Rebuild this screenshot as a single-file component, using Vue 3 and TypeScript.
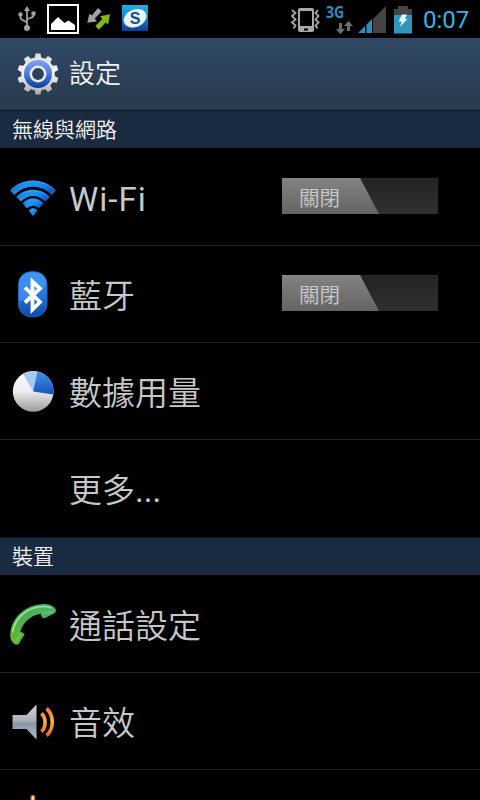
<template>
  <div class="screen">
    <!-- System status bar -->
    <div class="status-bar">
      <div class="notifications">
        <svg class="usb" width="20" height="28" viewBox="17 5 20 28">
          <g fill="none" stroke="#a3a5a3" stroke-width="1.7">
            <path d="M27 9v18M27 23.500c0-3-6.500-2.500-6.500-6v-3M27 20.500c0-3 6.500-2 6.500-5v-3" />
          </g>
          <path d="M27 6l3 5h-6zM31.500 11.500h4v4h-4z" fill="#a3a5a3" />
          <circle cx="20.500" cy="14.500" r="2.200" fill="#a3a5a3" />
          <circle cx="27" cy="28" r="3" fill="#a3a5a3" />
        </svg>
        <svg class="picture" width="32" height="30" viewBox="0 0 32 30">
          <rect x="1" y="1" width="30" height="28" fill="#000" stroke="#fff" stroke-width="2" />
          <path d="M4 26v-6l7-7 6.500 6 4-2.500L28 21v5z" fill="#fff" />
        </svg>
        <svg class="transfer" width="24" height="24" viewBox="87 7 24 24">
          <path d="M98 8l3.600 3.600-6.900 7 2.200 3-9.600 1.200 2-9 2.500 1.600z" fill="#a0a1a0" />
          <path d="M98.700 29.700l-3.400-3.600 7-7.200-2.200-2.600 9.900-2-1.900 10.400-2.400-2.200z" fill="#83b812" />
        </svg>
        <svg width="26" height="26" viewBox="0 0 26 26">
          <defs>
            <linearGradient id="appBg" x2="0" y2="1">
              <stop offset="0" stop-color="#18b3e5" />
              <stop offset=".5" stop-color="#1683cc" />
              <stop offset="1" stop-color="#093c98" />
            </linearGradient>
          </defs>
          <rect width="26" height="26" fill="url(#appBg)" />
          <ellipse cx="13" cy="13.200" rx="11.800" ry="8.700" fill="#eaf3f8" transform="rotate(-24 13 13)" />
          <text x="13.200" y="18.800" class="app-letter">S</text>
        </svg>
      </div>

      <div class="indicators">
        <svg class="vibrate" width="30" height="26" viewBox="290 7 30 26">
          <rect x="298" y="8" width="16" height="24" rx="2" fill="#a7a9a7" />
          <path d="M300 11h12v15h-12zM304 28.500h4v2h-4z" fill="#000" />
          <path d="M292 10l3.500 3-3.500 3 3.500 3.500-3.500 3 3.500 3-2 3M318 10l-2.500 3 3 3-3 3.500 3 3-3 3 2 3" fill="none" stroke="#a7a9a7" stroke-width="1.800" />
        </svg>
        <div class="network">
          <span>3G</span>
          <svg width="18" height="14" viewBox="336 21 18 14">
            <path d="M339 23h3v6h3l-4.500 5.300-4.500-5.300h3zM347 31v-5h-3l4.500-5 4.500 5h-3v5z" fill="#6c6d6e" />
          </svg>
        </div>
        <svg class="signal" width="28" height="27" viewBox="0 0 28 27">
          <path d="M28 0v27H15V13z" fill="#444" />
          <path d="M0 27l7-7v7zM8.500 27v-8.500L14 13v14z" fill="#2b8fba" />
        </svg>
        <svg class="battery" width="18" height="28" viewBox="0 0 18 28">
          <path d="M4 0h10v3h4v7H0V3h4z" fill="#444" />
          <path d="M0 9h18v18.500H0z" fill="#3295bd" />
          <path d="M8 8.500h5l-2 4.500h2.500L6 21l1.500-5.500H4.500z" fill="#e4f4fa" />
        </svg>
        <span class="clock">0:07</span>
      </div>
    </div>

    <!-- Title bar -->
    <div class="title-bar">
      <svg class="title-icon" width="42" height="42" viewBox="-21 -21 42 42">
        <defs>
          <linearGradient id="gear" x2="0" y2="1">
            <stop offset="0" stop-color="#dcdcdc" />
            <stop offset=".5" stop-color="#f7f7f5" />
            <stop offset="1" stop-color="#aaa9a7" />
          </linearGradient>
          <linearGradient id="gearRing" x2="0" y2="1">
            <stop offset="0" stop-color="#7ea1ff" />
            <stop offset=".5" stop-color="#4b78df" />
            <stop offset="1" stop-color="#073f9a" />
          </linearGradient>
        </defs>
        <path :d="gearPath" fill="url(#gear)" />
        <circle r="14" fill="url(#gearRing)" />
        <circle r="7.200" fill="#2b4059" stroke="#e9e9e7" stroke-width="2.600" />
      </svg>
      <h1>設定</h1>
    </div>

    <!-- Settings list -->
    <section v-for="section in sections" :key="section.title">
      <h2>{{ section.title }}</h2>
      <div v-for="item in section.items" :key="item.icon" class="row">
        <div class="icon">
          <svg v-if="item.icon === 'wifi'" width="48" height="48" viewBox="9 174 48 48">
            <defs>
              <linearGradient id="wifi" x2="1" y2=".3">
                <stop offset="0" stop-color="#0a55bb" />
                <stop offset=".4" stop-color="#1e94f5" />
                <stop offset=".7" stop-color="#168cf0" />
                <stop offset="1" stop-color="#0a62cd" />
              </linearGradient>
            </defs>
            <g fill="url(#wifi)">
              <path d="M10 190.500C22 177 44 177 56 190.500l-4.500 4.500C42 184 24 184 14.500 195z" />
              <path d="M16.200 197C25 187.300 41 187.300 49.800 197l-4.600 4.600C38 194 28 194 20.800 201.600z" />
              <path d="M22.400 203.300C28.500 196.700 37.500 196.700 43.600 203.300l-4.700 5C35.500 204.800 30.500 204.800 27.100 208.300z" />
              <path d="M28.500 210.500c2.500-3 6.500-3 9 0L33 216z" />
            </g>
            <path d="M12 189.500C23 178.500 43 178.500 54 189.500M18.500 196.500c8-7.500 21-7.500 29 0M25 203.300c5-4.500 11-4.500 16 0M30.500 210c1.500-1.500 3.500-1.500 5 0" fill="none" stroke="#38c0ff" stroke-width="1" opacity=".5" />
          </svg>

          <svg v-else-if="item.icon === 'bluetooth'" width="48" height="48" viewBox="9 270 48 48">
            <defs>
              <linearGradient id="bt" x2="0" y2="1">
                <stop offset="0" stop-color="#2a8df3" />
                <stop offset=".5" stop-color="#2876e4" />
                <stop offset="1" stop-color="#0c49a8" />
              </linearGradient>
              <linearGradient id="btGloss" x2=".5" y2="1">
                <stop offset="0" stop-color="#73b5ff" stop-opacity=".15" />
                <stop offset="1" stop-color="#73b5ff" stop-opacity=".4" />
              </linearGradient>
            </defs>
            <rect x="18.500" y="270.700" width="28.500" height="45" rx="12.500" fill="url(#bt)" stroke="#1c68c4" />
            <path d="M19 300v-17c0-8 5-12 13-12 9 0 14 4 14 12-4 9-16 16-27 17z" fill="url(#btGloss)" />
            <path d="M25 286.500L40 301l-7.500 7.500v-28L40 287.500 25 301.500" fill="none" stroke="#fff" stroke-width="3.800" />
          </svg>

          <svg v-else-if="item.icon === 'data'" width="48" height="48" viewBox="9 367 48 48">
            <defs>
              <linearGradient id="pie" x2="0" y2="1">
                <stop offset="0" stop-color="#fff" />
                <stop offset=".5" stop-color="#ececec" />
                <stop offset="1" stop-color="#9b9b9b" />
              </linearGradient>
              <linearGradient id="pieSlice" x2="0" y2="1">
                <stop offset="0" stop-color="#3c91e9" />
                <stop offset="1" stop-color="#1753b6" />
              </linearGradient>
            </defs>
            <circle cx="33.200" cy="390.400" r="20.400" fill="url(#pie)" />
            <path d="M33.200 390.400L22.900 372.700A20.400 20.400 0 0 1 37.400 370.400z" fill="#a5c8ed" />
            <path d="M33.200 390.400L37.400 370.400A20.400 20.400 0 0 1 53.400 393.500z" fill="url(#pieSlice)" />
          </svg>

          <svg v-else-if="item.icon === 'call'" width="48" height="48" viewBox="9 600.500 48 48">
            <defs>
              <linearGradient id="call" x1="1" x2="0" y2="1">
                <stop offset="0" stop-color="#49b56d" />
                <stop offset=".55" stop-color="#4cae52" />
                <stop offset="1" stop-color="#66ba25" />
              </linearGradient>
            </defs>
            <path d="M10.300 636C10 618 25 603.500 45 603.600c5 .2 8.500 1.800 10.800 5.200.5 2-.3 3.500-2.300 4.500l-9 4.500c-2 .2-3.200-1-3.800-4.500C31 614.500 22.500 622.500 20.300 631.500c2 .1 3.600 1 4.200 2.500L19 643c-1.500 1.500-3 1.500-4.500.5-2.500-2-3.900-4.500-4.200-7.500z" fill="url(#call)" />
            <path d="M12.500 632C15 616 29 605.500 45 606c2.500 0 4.500.5 6 1.500" fill="none" stroke="#baf3b5" stroke-width="1.600" opacity=".75" />
            <path d="M42.500 613.500l11-3M15.500 641l5.500-8.500" fill="none" stroke="#a0eb79" stroke-width="1.500" opacity=".3" />
          </svg>

          <svg v-else-if="item.icon === 'sound'" width="48" height="48" viewBox="9 697 48 48">
            <defs>
              <linearGradient id="speaker" x2="0" y2="1">
                <stop offset="0" stop-color="#d3d6d9" />
                <stop offset=".45" stop-color="#a9b1b8" />
                <stop offset=".55" stop-color="#8797a3" />
                <stop offset="1" stop-color="#b5bfc6" />
              </linearGradient>
              <linearGradient id="wave" x2="0" y2="1">
                <stop offset="0" stop-color="#f47b22" />
                <stop offset=".45" stop-color="#ffb042" />
                <stop offset="1" stop-color="#ed6b0c" />
              </linearGradient>
            </defs>
            <path d="M12.500 714h14L36.500 703.500v35L26.500 728h-14z" fill="url(#speaker)" />
            <path d="M41.300 712.500c5 3.500 5 14.500 0 18M46.500 707.500c7.700 6.500 7.700 20.500 0 27" fill="none" stroke="url(#wave)" stroke-width="3.600" />
          </svg>

          <svg v-else-if="item.icon === 'display'" width="48" height="48" viewBox="9 794 48 48">
            <rect x="30.500" y="794" width="4.500" height="12" rx="2" fill="#ed6a16" />
            <rect x="31.800" y="795" width="2" height="10" rx="1" fill="#ffe0b8" />
          </svg>
        </div>

        <span class="label" :class="{ latin: item.icon === 'wifi' }">{{ item.label }}</span>

        <button v-if="item.toggle" class="switch">
          <span class="thumb">{{ item.toggle }}</span>
        </button>
      </div>
    </section>
  </div>
</template>

<script setup lang="ts">
import { ref } from 'vue'

interface Item {
  icon: string
  label: string
  toggle?: string
}

interface Section {
  title: string
  items: Item[]
}

const sections = ref<Section[]>([
  {
    title: '無線與網路',
    items: [
      { icon: 'wifi', label: 'Wi-Fi', toggle: '關閉' },
      { icon: 'bluetooth', label: '藍牙', toggle: '關閉' },
      { icon: 'data', label: '數據用量' },
      { icon: 'more', label: '更多...' }
    ]
  },
  {
    title: '裝置',
    items: [
      { icon: 'call', label: '通話設定' },
      { icon: 'sound', label: '音效' },
      { icon: 'display', label: '' }
    ]
  }
])

// Gear outline with ten teeth, centred on 0,0
const point = (radius: number, degrees: number): string => {
  const a = (degrees * Math.PI) / 180
  return `${(radius * Math.sin(a)).toFixed(2)} ${(-radius * Math.cos(a)).toFixed(2)}`
}

const gearPath = 'M' + Array.from({ length: 10 }, (_, i) => {
  const a = i * 36
  return [point(16.8, a - 11), point(20.7, a - 7), point(20.7, a + 7), point(16.8, a + 11)].join('L')
}).join('L') + 'Z'
</script>

<style>
body {
  background: #000;
  overflow: hidden;
}
</style>

<style scoped>
.screen {
  width: 480px;
  height: 800px;
  overflow: hidden;
  background: #000;
  font-family: Roboto, "Noto Sans CJK TC DemiLight", "Noto Sans CJK TC", sans-serif;
}

svg {
  display: block;
  flex: none;
}

.status-bar {
  display: flex;
  justify-content: space-between;
  height: 38px;
  box-sizing: border-box;
  padding: 4px 9px 0 17px;
}

.notifications,
.indicators {
  display: flex;
  align-items: flex-start;
}

.usb {
  margin: 1px 10px 0 0;
}

.picture {
  margin-right: 8px;
}

.transfer {
  margin: 3px 11px 0 0;
}

.notifications svg:last-child {
  margin-top: 1px;
}

.app-letter {
  fill: #164d8c;
  font: bold 16px "Liberation Sans", sans-serif;
  text-anchor: middle;
}

.vibrate {
  margin: 3px 6px 0 0;
}

.network {
  width: 28px;
  margin-right: 4px;
}

.network span {
  display: block;
  height: 17px;
  color: #2b8fba;
  font: bold 16px/17px "Noto Sans", sans-serif;
  transform: scaleX(0.88);
  transform-origin: left;
}

.network svg {
  margin-left: 10px;
}

.signal {
  margin: 2px 8px 0 0;
}

.battery {
  margin: 2px 11px 0 0;
}

.clock {
  width: 48px;
  color: #33b5e5;
  font-size: 24px;
  line-height: 32px;
}

.title-bar {
  display: flex;
  align-items: center;
  height: 72px;
  padding-left: 17px;
  background: linear-gradient(#304866, #29394b);
}

.title-icon {
  margin-right: 10px;
}

h1 {
  margin: 0;
  color: #f3f3f3;
  font-size: 26px;
  font-weight: 400;
  line-height: 38px;
}

h2 {
  height: 38px;
  box-sizing: border-box;
  margin: 0;
  padding-left: 12px;
  border-top: 1px solid #0c1520;
  background: #1a2a41;
  color: #f3f3f3;
  font-size: 21px;
  font-weight: 400;
  line-height: 38px;
}

.row {
  display: flex;
  align-items: center;
  height: 97px;
  box-sizing: border-box;
  padding: 2px 42px 0 9px;
  border-bottom: 1px solid #242424;
}

h2 + .row {
  height: 98px;
  padding-top: 3px;
}

.row:last-child {
  border-bottom-color: transparent;
}

.icon {
  width: 48px;
  height: 48px;
  margin-right: 12px;
}

.label {
  flex: 1;
  padding-top: 3px;
  color: #c8c8c8;
  font-size: 33px;
  line-height: 48px;
}

.latin {
  letter-spacing: 1px;
}

.switch {
  width: 156px;
  height: 36px;
  margin: 0 0 4px;
  padding: 0;
  border: 1px solid #2b2b2b;
  background: linear-gradient(#232323, #303030);
}

.thumb {
  display: block;
  width: 97px;
  height: 36px;
  box-sizing: border-box;
  margin: -1px;
  padding: 1px 0 0 17px;
  background: linear-gradient(#838383, #646464);
  clip-path: polygon(0 0, 78px 0, 97px 100%, 0 100%);
  color: #c9c9c9;
  font: 20.500px/40px Roboto, "Noto Sans CJK TC DemiLight", "Noto Sans CJK TC", sans-serif;
  text-align: left;
}
</style>
